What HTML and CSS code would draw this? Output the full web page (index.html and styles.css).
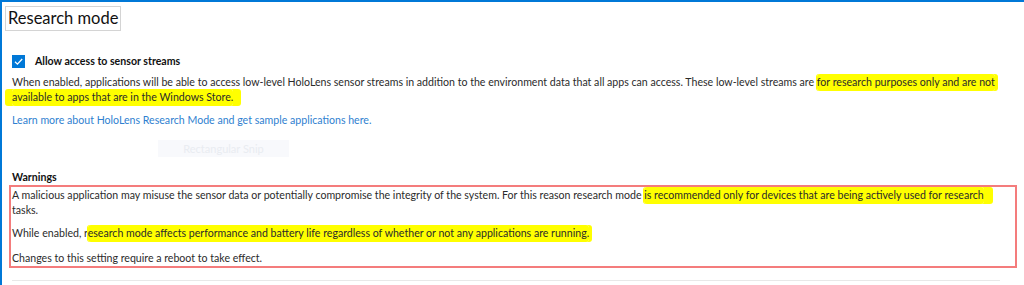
FILE: index.html
```html
<!DOCTYPE html>
<html lang="en">
<head>
<meta charset="UTF-8">
<title>Research mode</title>
<link rel="stylesheet" href="styles.css">
</head>
<body>
<div class="page">
    <h1 class="title">Research mode</h1>

    <label class="check-row">
        <span class="checkbox">
            <svg width="13" height="13" viewBox="0 0 13 13"><path d="M3 6.8 L5.4 9.1 L10.2 4" fill="none" stroke="#fff" stroke-width="1.3"/></svg>
        </span>
        <span class="check-label">Allow access to sensor streams</span>
    </label>

    <p class="desc">When enabled, applications will be able to access low-level HoloLens sensor streams in addition to the environment data that all apps can access. These low-level streams are <span class="hl">for research purposes only and are not</span> <span class="hl hl-wide">available to apps that are in the Windows Store.</span></p>

    <a class="learn" href="#">Learn more about HoloLens Research Mode and get sample applications here.</a>

    <div class="snip">Rectangular Snip</div>

    <div class="warn-title">Warnings</div>
    <div class="warn-box">
        <p>A malicious application may misuse the sensor data or potentially compromise the integrity of the system. For this reason research mode <span class="hl hl-long">is recommended only for devices that are being actively used for research</span> tasks.</p>
        <p>While enabled, r<span class="hl">esearch mode affects performance and battery life regardless of whether or not any applications are running.</span></p>
        <p>Changes to this setting require a reboot to take effect.</p>
    </div>

    <div class="divider"></div>
</div>
</body>
</html>
```
FILE: styles.css
```css
body { margin: 0; padding: 0; background: #fff; font-family: Lato, "Open Sans", sans-serif; font-size: 10.6px; line-height: 15px; color: #2b2b2b; overflow: hidden; }
.page { height: 283px; border-top: 2px solid #0078d7; border-left: 2px solid #0078d7; padding: 0 6px 0 10px; }

.title { display: inline-block; margin: 4px 0 0 -7px; padding: 0 2px; border: 1px solid #d4d4d4; font-size: 16.5px; font-weight: normal; line-height: 23px; color: #111; }

.check-row { display: flex; align-items: center; gap: 10px; margin-top: 23px; height: 15px; }
.checkbox { width: 13px; height: 13px; background: #0078d7; display: block; }
.checkbox svg { display: block; }
.check-label { font-weight: bold; color: #111; }

.desc { margin: 6px 0 0; }
.hl { background: #ffff00; padding: 2px 0 3px; box-decoration-break: clone; -webkit-box-decoration-break: clone; border-radius: 3px; box-shadow: 3px 0 0 #ffff00, -1px 0 0 #ffff00; }
.hl-wide { box-shadow: 8px 0 0 #ffff00, -7px 0 0 #ffff00; }
.hl-long { box-shadow: 9px 0 0 #ffff00, -1px 0 0 #ffff00; }

.learn { display: block; margin-top: 8px; color: #2f7fd0; text-decoration: none; }

.snip { width: 131px; height: 17px; margin: 12px 0 0 146px; background: #f8f9fc; color: #e9ecf1; font-size: 11px; line-height: 17px; text-align: center; }

.warn-title { margin-top: 13px; font-weight: bold; color: #111; }
.warn-box { margin-left: -3px; width: 981px; padding: 1px 22px 0 1px; border: 2px solid #f47c7c; }
.warn-box p { margin: 0; }
.warn-box p + p { margin-top: 8px; }
.warn-box p:last-child { margin-top: 10px; }

.divider { margin: 12px 18px 0 0; height: 1px; background: #e8e8e8; }
```
